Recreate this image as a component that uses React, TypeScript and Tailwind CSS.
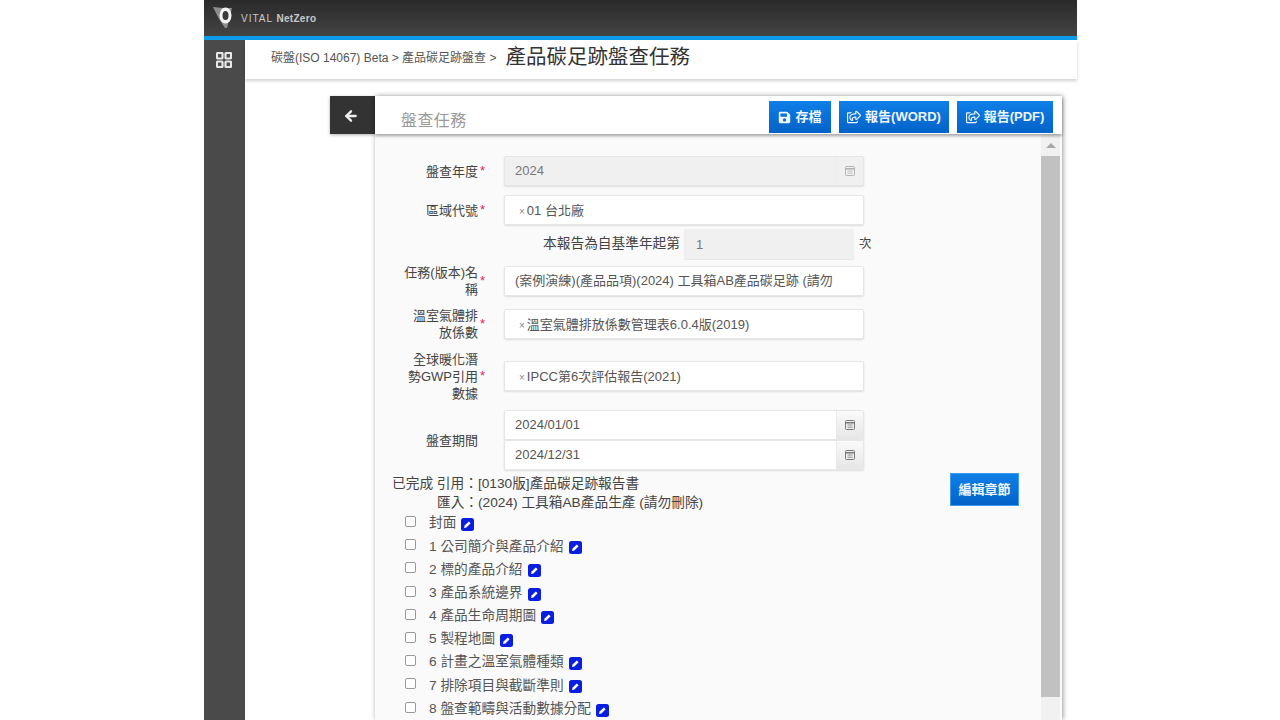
import { ArrowLeft } from "lucide-react";
import { FaRegShareSquare, FaSave } from "react-icons/fa";

const font = "font-['Liberation_Sans','Noto_Sans_CJK_TC',sans-serif]";

const chapters = [
  "封面",
  "1 公司簡介與產品介紹",
  "2 標的產品介紹",
  "3 產品系統邊界",
  "4 產品生命周期圖",
  "5 製程地圖",
  "6 計畫之溫室氣體種類",
  "7 排除項目與截斷準則",
  "8 盤查範疇與活動數據分配",
];

function CalendarIcon() {
  return (
    <svg width="12" height="12" viewBox="0 0 12 12" fill="none" stroke="#777" strokeWidth="1">
      <rect x="1.5" y="1.5" width="9" height="9" rx="1" />
      <path d="M1.5 3.8h9" strokeWidth="1.6" />
      <path d="M3.5 6h5M3.5 8.2h5" strokeWidth="0.8" />
    </svg>
  );
}

function EditIcon() {
  return (
    <svg width="13" height="13" viewBox="0 0 13 13" className="shrink-0 mt-[2px]">
      <rect width="13" height="13" rx="2.5" fill="#0a1ee0" />
      <path d="M3 10l.6-2.4 4.2-4.2 1.8 1.8-4.2 4.2z" fill="#fff" />
    </svg>
  );
}

function Label({ text, required = true }: { text: string[]; required?: boolean }) {
  return (
    <div className="w-[129px] flex items-center justify-end shrink-0 pr-[18px]">
      <div className="text-right text-[13px] leading-[17px] text-[#444] whitespace-nowrap">
        {text.map((t) => (
          <div key={t}>{t}</div>
        ))}
      </div>
      <span className={required ? "w-[8px] pl-[2px] text-[#e0245e] text-[13px]" : "w-[8px]"}>{required ? "*" : ""}</span>
    </div>
  );
}

function Field({ value, tag, disabled, icon }: { value: string; tag?: boolean; disabled?: boolean; icon?: boolean }) {
  return (
    <div
      className={
        "w-[360px] h-[30px] flex items-center rounded-[2px] border border-[#e6e6e6] shadow-[0_1px_2px_rgba(0,0,0,0.12)] text-[13px] text-[#555] overflow-hidden " +
        (disabled ? "bg-[#f0f0f0] text-[#777]" : "bg-white")
      }
    >
      <div className={"flex-1 whitespace-nowrap overflow-hidden " + (tag ? "ml-[14px] pt-[2px]" : "ml-[10px] mr-[30px]")}>
        {tag && <span className="text-[#888] text-[10px] mr-[2px]">×</span>}
        {value}
      </div>
      {icon && (
        <div className={"w-[27px] h-full flex items-center justify-center border-l border-[#e8e8e8] " + (disabled ? "opacity-50 bg-[#efefef]" : "bg-gradient-to-b from-[#fafafa] to-[#e6e6e6]")}>
          <CalendarIcon />
        </div>
      )}
    </div>
  );
}

function BlueButton({ icon, label, className }: { icon?: React.ReactNode; label: string; className: string }) {
  return (
    <button className={"flex items-center justify-center gap-[4px] bg-gradient-to-b from-[#0f7fe8] to-[#0562c8] text-[#eef5ff] text-[13px] font-bold " + className}>
      {icon}
      {label}
    </button>
  );
}

export default function App() {
  return (
    <div className={"h-screen overflow-hidden bg-white pl-[204px] " + font}>
      <div className="w-[873px] h-full flex flex-col">
        {/* Top bar */}
        <header className="h-[36px] shrink-0 bg-gradient-to-b from-[#2a2a2a] to-[#444] flex items-center pl-[8px] gap-[5px]">
          <svg width="24" height="24" viewBox="0 0 24 24">
            <path d="M1 1l10 1h9l-5 20-2 0-6-9z" fill="#8c8c8c" />
            <ellipse cx="13.5" cy="9.5" rx="6" ry="8" fill="#f2f2f2" />
            <ellipse cx="13.5" cy="9.5" rx="3" ry="4.5" fill="#3a3a3a" />
          </svg>
          <span className="text-[#c8c8c8] text-[10px] tracking-[1px]">
            VITAL <span className="font-bold tracking-[0.3px]">NetZero</span>
          </span>
        </header>
        <div className="h-[4px] shrink-0 bg-[#0d9ae8]" />

        <div className="flex-1 flex min-h-0">
          {/* Sidebar */}
          <aside className="w-[41px] shrink-0 bg-[#4a4a4a] flex justify-center pt-[12px] pr-[2px]">
            <svg width="16" height="16" viewBox="0 0 16 16" fill="none" stroke="#e8e8e8" strokeWidth="2.2">
              <rect x="1" y="1" width="5.5" height="5.5" rx="0.8" />
              <rect x="9.5" y="1" width="5.5" height="5.5" rx="0.8" />
              <rect x="1" y="9.5" width="5.5" height="5.5" rx="0.8" />
              <rect x="9.5" y="9.5" width="5.5" height="5.5" rx="0.8" />
            </svg>
          </aside>

          <main className="flex-1 min-w-0 flex flex-col">
            {/* Breadcrumb */}
            <div className="h-[39px] shrink-0 bg-white shadow-[0_2px_3px_rgba(0,0,0,0.18)] flex items-center pl-[26px] pb-[4px] text-[#555] text-[12px]">
              碳盤(ISO 14067) Beta &gt; 產品碳足跡盤查 &gt;
              <span className="ml-[9px] text-[20.5px] text-[#333]">產品碳足跡盤查任務</span>
            </div>

            <div className="flex-1 min-h-0 flex pl-[85px] pt-[17px]">
              {/* Back */}
              <div className="w-[45px] h-[38px] shrink-0 bg-[#333] flex items-center justify-center pr-[4px] pt-[1px] shadow-[0_1px_3px_rgba(0,0,0,0.3)]">
                <ArrowLeft size={16} strokeWidth={3.5} className="text-[#eee]" />
              </div>

              {/* Panel */}
              <section className="w-[687px] shrink-0 flex flex-col shadow-[1px_0_5px_rgba(0,0,0,0.4)]">
                <div className="h-[38px] shrink-0 bg-white shadow-[0_2px_3px_rgba(0,0,0,0.35)] z-10 flex items-start pt-[5px] pl-[26px] pr-[9px]">
                  <span className="mt-[8px] text-[16px] text-[#999] tracking-[0.4px]">盤查任務</span>
                  <div className="ml-auto flex gap-[8px]">
                    <BlueButton icon={<FaSave size={13} />} label="存檔" className="w-[62px] h-[32px]" />
                    <BlueButton icon={<FaRegShareSquare size={14} />} label="報告(WORD)" className="w-[110px] h-[32px]" />
                    <BlueButton icon={<FaRegShareSquare size={14} />} label="報告(PDF)" className="w-[96px] h-[32px]" />
                  </div>
                </div>

                <div className="flex-1 min-h-0 flex bg-[#fafafa] overflow-hidden">
                  <div className="flex-1 min-w-0">
                    <div className="flex flex-col pt-[22px]">
                      <div className="flex items-center">
                        <Label text={["盤查年度"]} />
                        <Field value="2024" disabled icon />
                      </div>
                      <div className="flex items-center mt-[9px]">
                        <Label text={["區域代號"]} />
                        <Field value="01 台北廠" tag />
                      </div>
                      <div className="flex items-center mt-[4px] h-[30px] pl-[165px] text-[13.7px] text-[#444]">
                        <span className="w-[144px] text-right pr-[4px] whitespace-nowrap">本報告為自基準年起第</span>
                        <div className="w-[170px] h-[30px] flex items-center pl-[12px] pt-[1px] bg-[#f0f0f0] rounded-[2px] text-[13px] text-[#777] shadow-[0_1px_1px_rgba(0,0,0,0.08)]">1</div>
                        <span className="ml-[5px] text-[12.5px]">次</span>
                      </div>
                      <div className="flex items-center mt-[6px] h-[31px]">
                        <Label text={["任務(版本)名", "稱"]} />
                        <Field value="(案例演練)(產品品項)(2024) 工具箱AB產品碳足跡 (請勿刪除)" />
                      </div>
                      <div className="flex items-center mt-[13px] h-[30px]">
                        <Label text={["溫室氣體排", "放係數"]} />
                        <Field value="溫室氣體排放係數管理表6.0.4版(2019)" tag />
                      </div>
                      <div className="flex items-center mt-[22px] h-[30px]">
                        <Label text={["全球暖化潛", "勢GWP引用", "數據"]} />
                        <Field value="IPCC第6次評估報告(2021)" tag />
                      </div>
                      <div className="flex items-center mt-[19px]">
                        <Label text={["盤查期間"]} required={false} />
                        <div className="flex flex-col">
                          <Field value="2024/01/01" icon />
                          <Field value="2024/12/31" icon />
                        </div>
                      </div>
                    </div>

                    <div className="flex items-start mt-[4px] pl-[17px]">
                      <div className="text-[13.7px] leading-[19px] text-[#444] whitespace-nowrap w-[558px]">
                        <div>已完成 引用：[0130版]產品碳足跡報告書</div>
                        <div className="pl-[45px]">匯入：(2024) 工具箱AB產品生產 (請勿刪除)</div>
                      </div>
                      <BlueButton label="編輯章節" className="w-[69px] h-[33px] mt-[-1px] border border-[#3d9cf0]" />
                    </div>

                    <ul className="pl-[30px]">
                      {chapters.map((c) => (
                        <li key={c} className="h-[23.2px] flex items-center text-[13.7px] text-[#555]">
                          <span className="w-[11px] h-[11px] mb-[4px] rounded-[2px] border border-[#999] bg-white" />
                          <span className="ml-[13px] mr-[5px]">{c}</span>
                          <EditIcon />
                        </li>
                      ))}
                    </ul>
                  </div>

                  {/* Scrollbar */}
                  <div className="w-[19px] shrink-0 mr-[2px] bg-[#f1f1f1] flex flex-col">
                    <div className="h-[22px] flex items-center justify-center">
                      <div className="w-0 h-0 border-l-[5px] border-r-[5px] border-b-[5px] border-l-transparent border-r-transparent border-b-[#aaa]" />
                    </div>
                    <div className="h-[541px] bg-[#c1c1c1]" />
                  </div>
                </div>
              </section>
            </div>
          </main>
        </div>
      </div>
    </div>
  );
}
